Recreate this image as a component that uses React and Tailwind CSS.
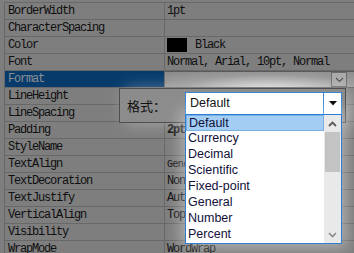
import React from 'react';

const rows = [
  { label: 'BorderWidth', value: '1pt' },
  { label: 'CharacterSpacing', value: '' },
  { label: 'Color', value: 'Black', swatch: true },
  { label: 'Font', value: 'Normal, Arial, 10pt, Normal' },
  { label: 'Format', value: '', selected: true },
  { label: 'LineHeight', value: '' },
  { label: 'LineSpacing', value: '' },
  { label: 'Padding', value: '2pt', bold: true },
  { label: 'StyleName', value: '' },
  { label: 'TextAlign', value: 'General', small: true },
  { label: 'TextDecoration', value: 'None' },
  { label: 'TextJustify', value: 'Auto' },
  { label: 'VerticalAlign', value: 'Top' },
  { label: 'Visibility', value: '' },
  { label: 'WrapMode', value: 'WordWrap' },
];

const options = ['Default', 'Currency', 'Decimal', 'Scientific', 'Fixed-point', 'General', 'Number', 'Percent'];

const mono = { fontFamily: '"Liberation Mono", "Courier New", monospace' };

const Row = ({ row }) => (
  <div className="flex h-[17px] border-b border-[#686868]">
    <div
      className={`w-[160px] shrink-0 border-r border-[#686868] pl-[3px] leading-[16px] text-[12px] tracking-[-1.2px] ${
        row.selected ? 'bg-[#073b6b] text-[#8a8f96]' : 'text-[#0f0f0f]'
      }`}
      style={mono}
    >
      {row.label}
    </div>
    {row.selected ? (
      <div className="flex flex-1 border-t border-[#5a5a5a] bg-[radial-gradient(ellipse_at_55%_120%,#e2e2e2,#9a9a9a_60%,#8a8a8a)]">
        <div className="flex-1" />
        <div className="mr-[7px] flex w-[16px] items-center justify-center border border-[#6a6a6a] bg-[#a9a9a9]">
          <svg width="9" height="6" viewBox="0 0 9 6">
            <path d="M1 1 L4.5 4.5 L8 1" fill="none" stroke="#4a4a4a" strokeWidth="1.1" />
          </svg>
        </div>
      </div>
    ) : (
      <div
        className={`flex flex-1 items-center gap-[8px] pl-[2px] text-[#0f0f0f] ${
          row.bold ? 'font-bold text-[12px] tracking-[-1.2px]' : row.small ? 'text-[10px] tracking-[-0.6px]' : 'text-[12px] tracking-[-1.2px]'
        }`}
        style={mono}
      >
        {row.swatch && <span className="h-[14px] w-[20px] bg-black" />}
        <span>{row.value}</span>
      </div>
    )}
  </div>
);

export default function App() {
  return (
    <div className="relative h-[253px] w-[354px] overflow-hidden bg-[#7e7e7e]">
      <div className="ml-[4px] mt-[2px] border-l border-t border-[#686868]">
        {rows.map((r) => (
          <Row key={r.label} row={r} />
        ))}
      </div>

      <div className="absolute left-[119px] top-[88px] flex h-[35px] w-[227px] border border-[#4e4e4e] bg-[#8c8c8c] shadow-[6px_0_16px_rgba(255,255,255,0.35)]">
        <div
          className="ml-[7px] mt-[7px] w-[58px] text-[13px] text-[#111]"
          style={{ fontFamily: '"Noto Sans CJK SC", "Noto Sans", sans-serif' }}
        >
          格式：
        </div>
        <div className="relative mt-[3px] h-[23px] w-[157px]">
          <div className="flex h-full border border-[#3585d6] bg-white">
            <div
              className="flex-1 pl-[4px] text-[12.5px] leading-[21px] text-black"
              style={{ fontFamily: '"Liberation Sans", Arial, sans-serif' }}
            >
              Default
            </div>
            <div className="flex w-[18px] items-center justify-center border-l border-[#3585d6] bg-white">
              <svg width="8" height="5" viewBox="0 0 8 5">
                <path d="M0 0 H8 L4 4.5 Z" fill="#000" />
              </svg>
            </div>
          </div>
          <div className="absolute left-0 top-[22px] flex h-[130px] w-[157px] border border-[#2b7ed3] bg-white shadow-[0_0_14px_4px_rgba(255,255,255,0.4)]">
            <div className="flex flex-1 flex-col" style={{ fontFamily: '"Liberation Sans", Arial, sans-serif' }}>
              {options.map((o, i) => (
                <div
                  key={o}
                  className={`h-[16px] pl-[2px] text-[12.5px] leading-[15px] text-[#10103a] ${
                    i === 0 ? 'border border-[#79b0e4] bg-[#a3cdf2] pl-[1px] leading-[13px]' : ''
                  }`}
                >
                  {o}
                </div>
              ))}
            </div>
            <div className="flex w-[17px] flex-col bg-[#e9e9e9]">
              <div className="flex h-[17px] items-center justify-center">
                <svg width="9" height="6" viewBox="0 0 9 6">
                  <path d="M1 5 L4.5 1.5 L8 5" fill="none" stroke="#5a5a5a" strokeWidth="1.8" />
                </svg>
              </div>
              <div className="mx-[1px] h-[40px] bg-[#c3c3c3]" />
              <div className="flex-1" />
              <div className="flex h-[17px] items-center justify-center">
                <svg width="9" height="6" viewBox="0 0 9 6">
                  <path d="M1 1 L4.5 4.5 L8 1" fill="none" stroke="#8a8a8a" strokeWidth="1.6" />
                </svg>
              </div>
            </div>
          </div>
        </div>
      </div>
    </div>
  );
}
